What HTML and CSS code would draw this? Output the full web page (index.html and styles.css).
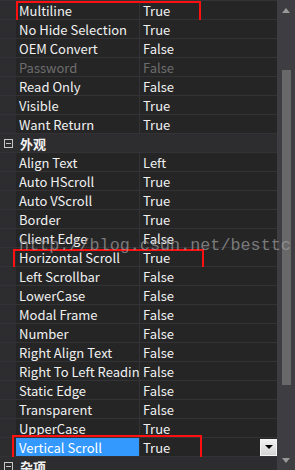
FILE: index.html
```html
<!DOCTYPE html>
<html lang="en">
<head>
    <meta charset="UTF-8">
    <title>Properties</title>
    <link rel="stylesheet" href="styles.css">
</head>
<body>
    <div class="grid">
        <div class="props">
            <div class="row"><span class="gut"></span><span class="name">Multiline</span><span class="val">True</span><i class="mark mark-a"></i></div>
            <div class="row"><span class="gut"></span><span class="name">No Hide Selection</span><span class="val">True</span></div>
            <div class="row"><span class="gut"></span><span class="name">OEM Convert</span><span class="val">False</span></div>
            <div class="row off"><span class="gut"></span><span class="name">Password</span><span class="val">False</span></div>
            <div class="row"><span class="gut"></span><span class="name">Read Only</span><span class="val">False</span></div>
            <div class="row"><span class="gut"></span><span class="name">Visible</span><span class="val">True</span></div>
            <div class="row"><span class="gut"></span><span class="name">Want Return</span><span class="val">True</span></div>
            <div class="row cat"><span class="gut"><i class="tog"></i></span><span class="cat-name">外观</span></div>
            <div class="row"><span class="gut"></span><span class="name">Align Text</span><span class="val">Left</span></div>
            <div class="row"><span class="gut"></span><span class="name">Auto HScroll</span><span class="val">True</span></div>
            <div class="row"><span class="gut"></span><span class="name">Auto VScroll</span><span class="val">True</span></div>
            <div class="row"><span class="gut"></span><span class="name">Border</span><span class="val">True</span></div>
            <div class="row"><span class="gut"></span><span class="name">Client Edge</span><span class="val">False</span></div>
            <div class="row"><span class="gut"></span><span class="name">Horizontal Scroll</span><span class="val">True</span><i class="mark mark-b"></i></div>
            <div class="row"><span class="gut"></span><span class="name">Left Scrollbar</span><span class="val">False</span></div>
            <div class="row"><span class="gut"></span><span class="name">LowerCase</span><span class="val">False</span></div>
            <div class="row"><span class="gut"></span><span class="name">Modal Frame</span><span class="val">False</span></div>
            <div class="row"><span class="gut"></span><span class="name">Number</span><span class="val">False</span></div>
            <div class="row"><span class="gut"></span><span class="name">Right Align Text</span><span class="val">False</span></div>
            <div class="row"><span class="gut"></span><span class="name">Right To Left Reading Order</span><span class="val">False</span></div>
            <div class="row"><span class="gut"></span><span class="name">Static Edge</span><span class="val">False</span></div>
            <div class="row"><span class="gut"></span><span class="name">Transparent</span><span class="val">False</span></div>
            <div class="row"><span class="gut"></span><span class="name">UpperCase</span><span class="val">True</span></div>
            <div class="row selected"><span class="gut"></span><span class="name">Vertical Scroll</span><span class="val">True<button class="drop"></button></span><i class="mark mark-c"></i></div>
            <div class="row cat"><span class="gut"><i class="tog"></i></span><span class="cat-name">杂项</span></div>
        </div>
        <div class="vscroll">
            <span class="arrow"><i class="tri-up"></i></span>
            <span class="thumb"></span>
            <span class="arrow arrow-end"><i class="tri-down"></i></span>
        </div>
        <div class="watermark">http://blog.csdn.net/besttc</div>
    </div>
</body>
</html>
```

FILE: styles.css
```css
body {
    margin: 0;
    background: #2d2d30;
    font-family: "Noto Sans CJK SC", "Noto Sans", sans-serif;
    font-size: 13px;
    color: #f1f1f1;
}
.grid {
    position: relative;
    display: flex;
    height: 470px;
    overflow: hidden;
}
.props {
    flex: 1;
    padding-top: 1px;
    background: #333337;
}
.row {
    position: relative;
    display: flex;
    height: 18px;
    line-height: 18px;
    margin-bottom: 1px;
    background: #252526;
}
.gut {
    width: 16px;
    flex: none;
    background: #2d2d30;
    display: flex;
    align-items: center;
    justify-content: center;
}
.name {
    width: 120px;
    flex: none;
    padding: 1px 0 0 3px;
    border-right: 1px solid #333337;
    white-space: nowrap;
    overflow: hidden;
}
.val {
    flex: 1;
    display: flex;
    align-items: center;
    padding: 1px 0 0 3px;
}
.off .name, .off .val {
    color: #6d6d6d;
}
.selected .name {
    background: #3399ff;
    color: #fff;
}
.drop {
    margin: -1px 0 0 auto;
    width: 17px;
    height: 17px;
    padding: 0;
    border: 1px solid #f4f4f4;
    background: linear-gradient(#f2f2f2, #d4d4d4);
    display: flex;
    align-items: center;
    justify-content: center;
}
.drop::after {
    content: "";
    border-left: 4px solid transparent;
    border-right: 4px solid transparent;
    border-top: 4px solid #000;
}
.cat {
    background: #2d2d30;
}
.cat-name {
    padding: 1px 0 0 4px;
    font-weight: bold;
}
.tog {
    width: 7px;
    height: 7px;
    border: 1px solid #c8c8c8;
    display: flex;
    align-items: center;
    justify-content: center;
}
.tog::after {
    content: "";
    width: 5px;
    height: 1px;
    background: #c8c8c8;
}
.mark {
    position: absolute;
    border: 2px solid #ff1010;
    pointer-events: none;
}
.mark-a { left: 16px; top: 0; width: 181px; height: 17px; }
.mark-b { left: 13px; top: 1px; width: 187px; height: 18px; }
.mark-c { left: 12px; top: -3px; width: 186px; height: 20px; }
.vscroll {
    width: 18px;
    flex: none;
    background: #3e3e42;
    display: flex;
    flex-direction: column;
    align-items: center;
}
.arrow {
    height: 20px;
    display: flex;
    align-items: center;
}
.arrow-end {
    margin-top: auto;
}
.tri-up {
    border-left: 4.5px solid transparent;
    border-right: 4.5px solid transparent;
    border-bottom: 5px solid #999;
}
.tri-down {
    border-left: 4.5px solid transparent;
    border-right: 4.5px solid transparent;
    border-top: 5px solid #999;
}
.thumb {
    width: 9px;
    height: 315px;
    margin-top: 50px;
    background: #686868;
}
.watermark {
    position: absolute;
    left: 19px;
    top: 236px;
    font-family: "Liberation Mono", monospace;
    font-size: 16.8px;
    color: rgba(160, 160, 160, 0.7);
    pointer-events: none;
    white-space: nowrap;
}
```
